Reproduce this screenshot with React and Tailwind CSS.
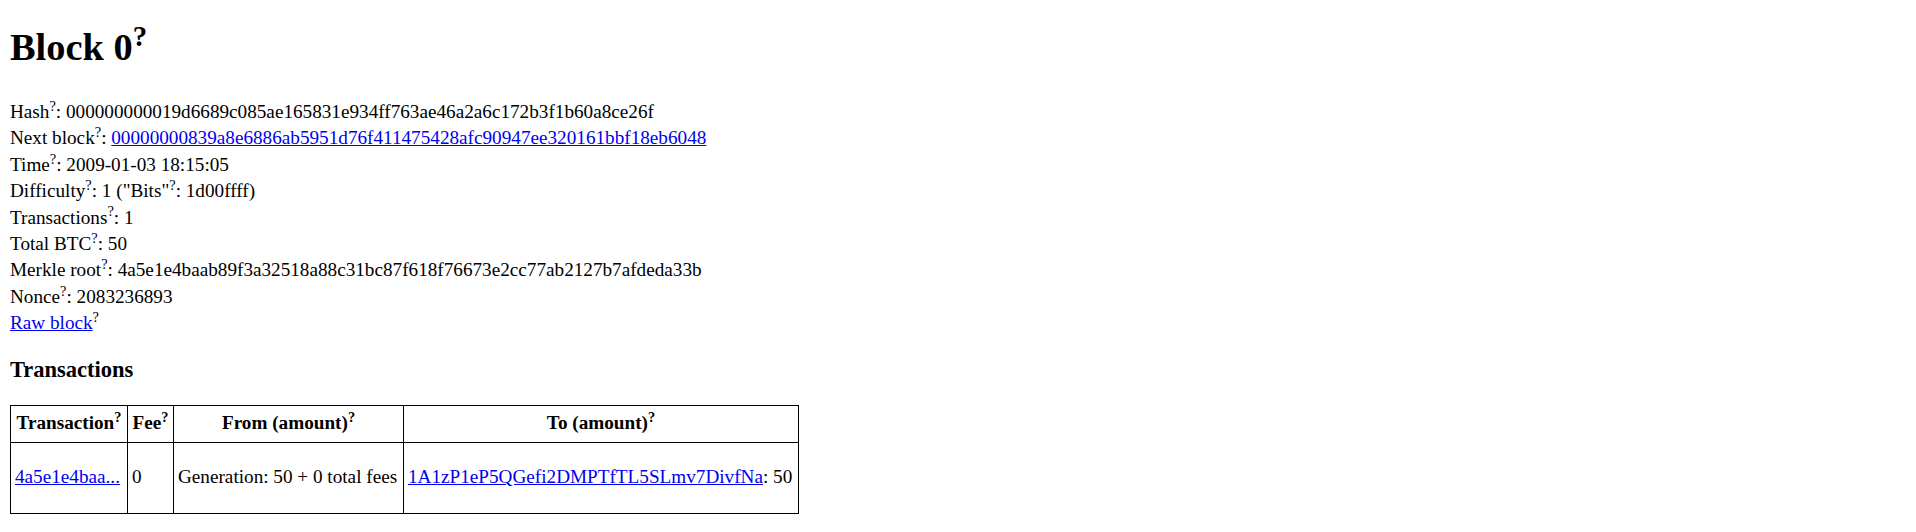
const rows = [
  { label: 'Hash', value: '000000000019d6689c085ae165831e934ff763ae46a2a6c172b3f1b60a8ce26f' },
  { label: 'Next block', value: '00000000839a8e6886ab5951d76f411475428afc90947ee320161bbf18eb6048', link: true },
  { label: 'Time', value: '2009-01-03 18:15:05' },
  { label: 'Difficulty', value: null },
  { label: 'Transactions', value: '1' },
  { label: 'Total BTC', value: '50' },
  { label: 'Merkle root', value: '4a5e1e4baab89f3a32518a88c31bc87f618f76673e2cc77ab2127b7afdeda33b' },
  { label: 'Nonce', value: '2083236893' },
];

function Q() {
  return <sup>?</sup>;
}

function A({ children }) {
  return <a href="#" className="text-[#0000ee] underline">{children}</a>;
}

export default function App() {
  return (
    <div className="min-h-[532px] bg-white px-[10px] font-['Liberation_Serif',serif] text-[19.2px] text-black">
      <h1 className="pt-[25px] text-[38.4px] font-bold leading-[44px]">
        Block 0<Q />
      </h1>

      <div className="mt-[30px] leading-[26.4px]">
        {rows.map((r) => (
          <div key={r.label}>
            {r.label}
            <Q />:{' '}
            {r.value === null ? (
              <>
                1 ("Bits"<Q />: 1d00ffff)
              </>
            ) : r.link ? (
              <A>{r.value}</A>
            ) : (
              r.value
            )}
          </div>
        ))}
        <div>
          <A>Raw block</A>
          <Q />
        </div>
      </div>

      <h3 className="mt-[20px] text-[22.5px] font-bold leading-[26px]">Transactions</h3>

      <table className="mt-[22px] border-collapse border border-black">
        <thead>
          <tr className="h-[37px]">
            <th className="w-[117px] border border-black px-[4px] text-center font-bold">Transaction<Q /></th>
            <th className="w-[46px] border border-black px-[4px] text-center font-bold">Fee<Q /></th>
            <th className="w-[230px] border border-black px-[4px] text-center font-bold">From (amount)<Q /></th>
            <th className="w-[395px] border border-black px-[4px] text-center font-bold">To (amount)<Q /></th>
          </tr>
        </thead>
        <tbody>
          <tr className="h-[71px]">
            <td className="border border-black px-[4px] align-middle"><A>4a5e1e4baa...</A></td>
            <td className="border border-black px-[4px] align-middle">0</td>
            <td className="border border-black px-[4px] align-middle whitespace-nowrap">Generation: 50 + 0 total fees</td>
            <td className="border border-black px-[4px] align-middle whitespace-nowrap">
              <A>1A1zP1eP5QGefi2DMPTfTL5SLmv7DivfNa</A>: 50
            </td>
          </tr>
        </tbody>
      </table>
    </div>
  );
}
